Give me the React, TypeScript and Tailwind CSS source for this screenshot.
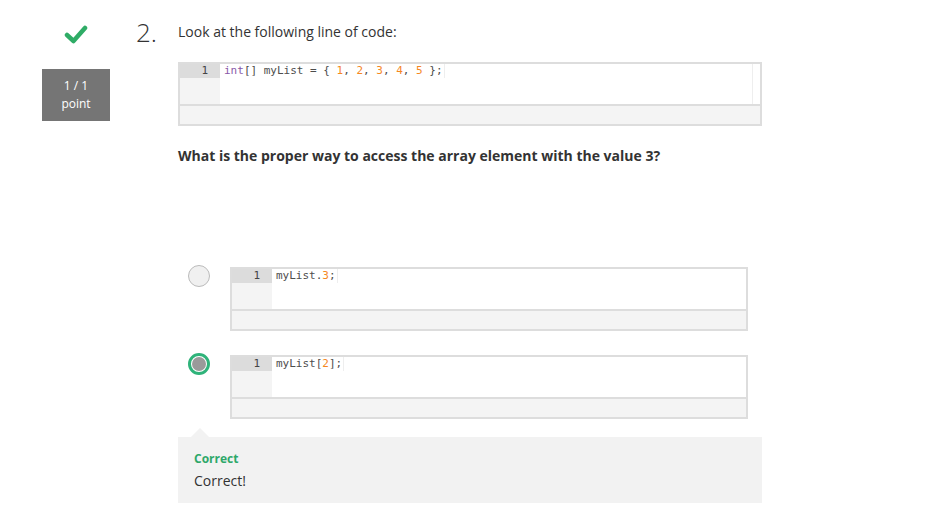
import React from "react";

const mono = { fontFamily: '"DejaVu Sans Mono", "Liberation Mono", monospace' };

function CodeBox({ children, margin = false }: { children: React.ReactNode; margin?: boolean }) {
  return (
    <div className="border-2 border-[#dddddd] bg-white">
      <div className="flex h-[40px]">
        <div className="w-[40px] bg-[#f4f4f4] shrink-0">
          <div className="h-[14px] bg-[#dcdcdc] text-right pr-[12px] text-[11px] leading-[14px] text-[#444]" style={mono}>
            1
          </div>
        </div>
        <div className="flex-1 flex">
          <div className="flex-1 pl-[4px] text-[11px] leading-[14px]" style={mono}>
            <span className="inline-block align-top h-[14px] text-[#4d4d4c] border-r border-[#eeeeee] pr-[1px]">
              {children}
            </span>
          </div>
          {margin && <div className="w-[8px] border-l border-[#eeeeee]" />}
        </div>
      </div>
      <div className="h-[20px] bg-[#f4f4f4] border-t-2 border-[#dddddd]" />
    </div>
  );
}

const N = ({ v }: { v: string }) => <span className="text-[#f5871f]">{v}</span>;

export default function App() {
  return (
    <div className="w-[934px] h-[518px] bg-white text-[#333]" style={{ fontFamily: '"Open Sans", "Noto Sans", sans-serif' }}>
      <div className="flex pt-[20px]">
        {/* left column: status */}
        <div className="w-[136px] pl-[42px] shrink-0">
          <div className="w-[68px] flex flex-col items-center">
            <svg width="24" height="20" viewBox="0 0 24 20" className="mt-[5px]">
              <polyline points="3,10 9.5,16 21,3" fill="none" stroke="#2fac66" strokeWidth="4.5" strokeLinecap="round" strokeLinejoin="round" />
            </svg>
            <div className="mt-[24px] w-[68px] h-[52px] bg-[#757575] text-white text-[12px] leading-[18px] flex flex-col items-center justify-center">
              <span>1 / 1</span>
              <span>point</span>
            </div>
          </div>
        </div>

        {/* number */}
        <div className="w-[42px] shrink-0 text-[26px] leading-[24px] font-light text-[#333]">2.</div>

        {/* content */}
        <div className="w-[584px]">
          <div className="text-[14px] leading-[20px] pt-[2px]">Look at the following line of code:</div>
          <div className="mt-[20px]">
            <CodeBox margin>
              <span className="text-[#8959a8]">int</span>[] myList = {"{"} <N v="1" />, <N v="2" />, <N v="3" />, <N v="4" />, <N v="5" /> {"};"}
            </CodeBox>
          </div>
          <div className="mt-[20px] text-[14px] leading-[20px] font-bold">
            What is the proper way to access the array element with the value 3?
          </div>

          <div className="mt-[101px] flex flex-col gap-[24px]">
            <div className="flex items-start">
              <div className="ml-[10px] mt-[-2px] w-[22px] h-[22px] rounded-full border-[1.5px] border-[#bbbbbb] bg-[#f0f0f0] shrink-0" />
              <div className="ml-[20px] w-[518px]">
                <CodeBox>
                  myList.<N v="3" />;
                </CodeBox>
              </div>
            </div>
            <div className="flex items-start">
              <div className="ml-[10px] mt-[-2px] w-[22px] h-[22px] rounded-full border-[3px] border-[#2fb37a] bg-white shrink-0 flex items-center justify-center">
                <div className="w-[14px] h-[14px] rounded-full bg-[#9a9a9a]" />
              </div>
              <div className="ml-[20px] w-[518px]">
                <CodeBox>
                  myList[<N v="2" />];
                </CodeBox>
              </div>
            </div>
          </div>

          <div className="relative mt-[18px] bg-[#f2f2f2] pl-[16px] pt-[14px] pb-[12px]">
            <div className="absolute left-[13px] top-[-9px] w-0 h-0 border-l-[9px] border-r-[9px] border-b-[9px] border-l-transparent border-r-transparent border-b-[#f2f2f2]" />
            <div className="text-[12px] leading-[16px] font-bold text-[#2ea86a]">Correct</div>
            <div className="mt-[4px] text-[14px] leading-[20px] text-[#333]">Correct!</div>
          </div>
        </div>
      </div>
    </div>
  );
}
